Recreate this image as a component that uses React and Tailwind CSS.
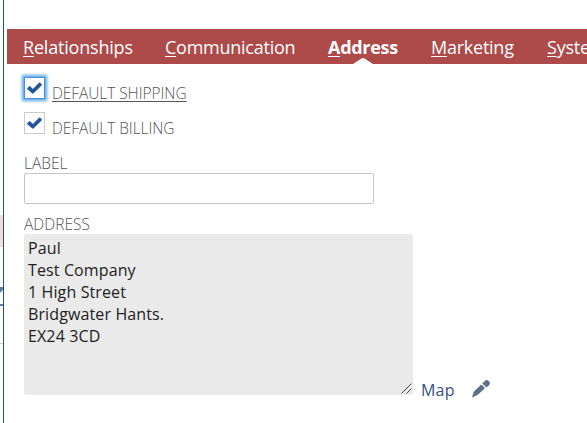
import React, { useState } from 'react';

const tabs = [
  { label: 'Relationships', width: 'w-[109px]', tracking: 'tracking-[-0.2px]' },
  { label: 'Communication', width: 'w-[130px]', tracking: 'tracking-[-0.25px]' },
  { label: 'Address', width: 'w-[70px]', tracking: 'tracking-[-0.3px]', active: true },
  { label: 'Marketing', width: 'w-[83px]', tracking: 'tracking-[-0.25px]' },
  { label: 'System', width: 'w-[64px]', tracking: 'tracking-[-0.2px]' },
];

const address = `Paul
Test Company
1 High Street
Bridgwater Hants.
EX24 3CD`;

function Tab({ label, width, tracking, active }) {
  return (
    <a
      className={`relative shrink-0 whitespace-nowrap text-[18px] leading-[36px] text-white ${width} ${tracking} ${
        active ? 'font-bold' : ''
      }`}
    >
      <span className="underline decoration-1 underline-offset-2">{label[0]}</span>
      {label.slice(1)}
      {active && (
        <svg className="absolute bottom-0 left-[25px]" width="20" height="6" viewBox="0 0 20 6">
          <path d="M0 6 L8.5 0.5 Q10 -0.4 11.5 0.5 L20 6 Z" fill="#fff" />
        </svg>
      )}
    </a>
  );
}

function CheckField({ label, focused, checked, onChange }) {
  return (
    <div className="flex h-[35px] items-start">
      <button
        onClick={onChange}
        className={`flex h-[22px] w-[21px] shrink-0 items-center justify-center border bg-white ${
          focused ? 'border-[#3f93e0] shadow-[0_0_3px_2px_#5ba5ea]' : 'border-[#cccccc]'
        }`}
      >
        {checked && (
          <svg width="17" height="14" viewBox="0 0 17 14">
            <path
              d="M1.2 7.2 L3.2 5.2 Q3.8 4.8 4.4 5.4 L6.9 7.9 L13 1.8 Q13.8 1.2 14.5 1.9 L15.7 3.2 Q16.2 3.9 15.6 4.5 L7.7 12.3 Q6.8 13 6 12.3 L1.4 8.2 Q0.8 7.7 1.2 7.2 Z"
              fill="#24569a"
            />
          </svg>
        )}
      </button>
      <span
        className={`ml-[7px] mt-[5px] whitespace-nowrap text-[15.5px] font-light leading-[22px] tracking-[-0.08px] text-[#555555] ${
          focused ? 'underline decoration-1 underline-offset-2' : ''
        }`}
      >
        {label}
      </span>
    </div>
  );
}

export default function App() {
  const [shipping, setShipping] = useState(true);
  const [billing, setBilling] = useState(true);

  return (
    <div className="flex h-[423px] w-[587px] overflow-hidden bg-white font-['Open_Sans',sans-serif]">
      {/* edge of the page behind the panel */}
      <div className="w-[3px] shrink-0 overflow-hidden pt-[215px]">
        <div className="h-[32px] bg-[#f2dcdc]" />
        <svg className="mt-[39px] block" width="3" height="20" viewBox="0 0 3 20">
          <path d="M0 1 H3 V4 L0 7 Z" fill="#657b9c" />
          <path d="M0 19 H3" stroke="#657b9c" strokeWidth="2" />
        </svg>
        <div className="mt-[37px] h-px bg-[#cccccc]" />
      </div>

      <div className="min-w-0 flex-1 border-l border-[#20527a] pl-[3px] pt-[29px]">
        <nav className="flex h-[35px] gap-[33px] overflow-hidden bg-[#ad4b4b] pl-[16px]">
          {tabs.map((tab) => (
            <Tab key={tab.label} {...tab} />
          ))}
        </nav>

        <div className="pl-[17px] pt-[13px]">
          <CheckField label="DEFAULT SHIPPING" focused checked={shipping} onChange={() => setShipping(!shipping)} />
          <CheckField label="DEFAULT BILLING" checked={billing} onChange={() => setBilling(!billing)} />

          <label className="mt-[6px] block text-[15.5px] font-light leading-[20px] text-[#555555]">LABEL</label>
          <input className="block h-[31px] w-[350px] rounded-[2px] border border-[#c6c6c6] px-1 outline-none" />

          <label className="mt-[10px] block text-[15.5px] font-light leading-[20px] text-[#555555]">ADDRESS</label>
          <div className="flex items-end">
            <div className="relative h-[161px] w-[389px] shrink-0 rounded-[3px] bg-[#eaeaea]">
              <textarea
                readOnly
                value={address}
                className="block h-full w-full resize-none overflow-hidden px-1 pt-[3px] text-[16px] leading-[22px] tracking-[0.12px] text-[#222222] outline-none"
              />
              <svg className="absolute bottom-px right-px" width="11" height="11" viewBox="0 0 11 11">
                <path d="M0.5 10.5 L10.5 0.5 M5.5 10.5 L10.5 5.5" stroke="#444" strokeWidth="1" />
              </svg>
            </div>
            <a className="mb-[-6px] ml-[8px] w-[34px] text-[16px] leading-[22px] tracking-[0.2px] text-[#3a4f85]">Map</a>
            <svg className="mb-[-3px] ml-[16px]" width="20" height="19" viewBox="0 0 20 19">
              <path d="M1 18.5 L2.5 13.5 Q3 12.4 4 11.4 L9.5 6.2 Q10.5 5.5 11.3 6.3 L13.3 8.3 Q14 9.1 13.2 9.9 L7.4 15.2 Q6.5 16 5.4 16.5 Z" fill="#5d708a" />
              <path d="M11.3 4.6 L13.7 2 Q15.7 0.2 17.8 2 Q19.8 4 18 6.2 L15.5 8.6 Z" fill="#5d708a" />
            </svg>
          </div>
        </div>
      </div>
    </div>
  );
}
